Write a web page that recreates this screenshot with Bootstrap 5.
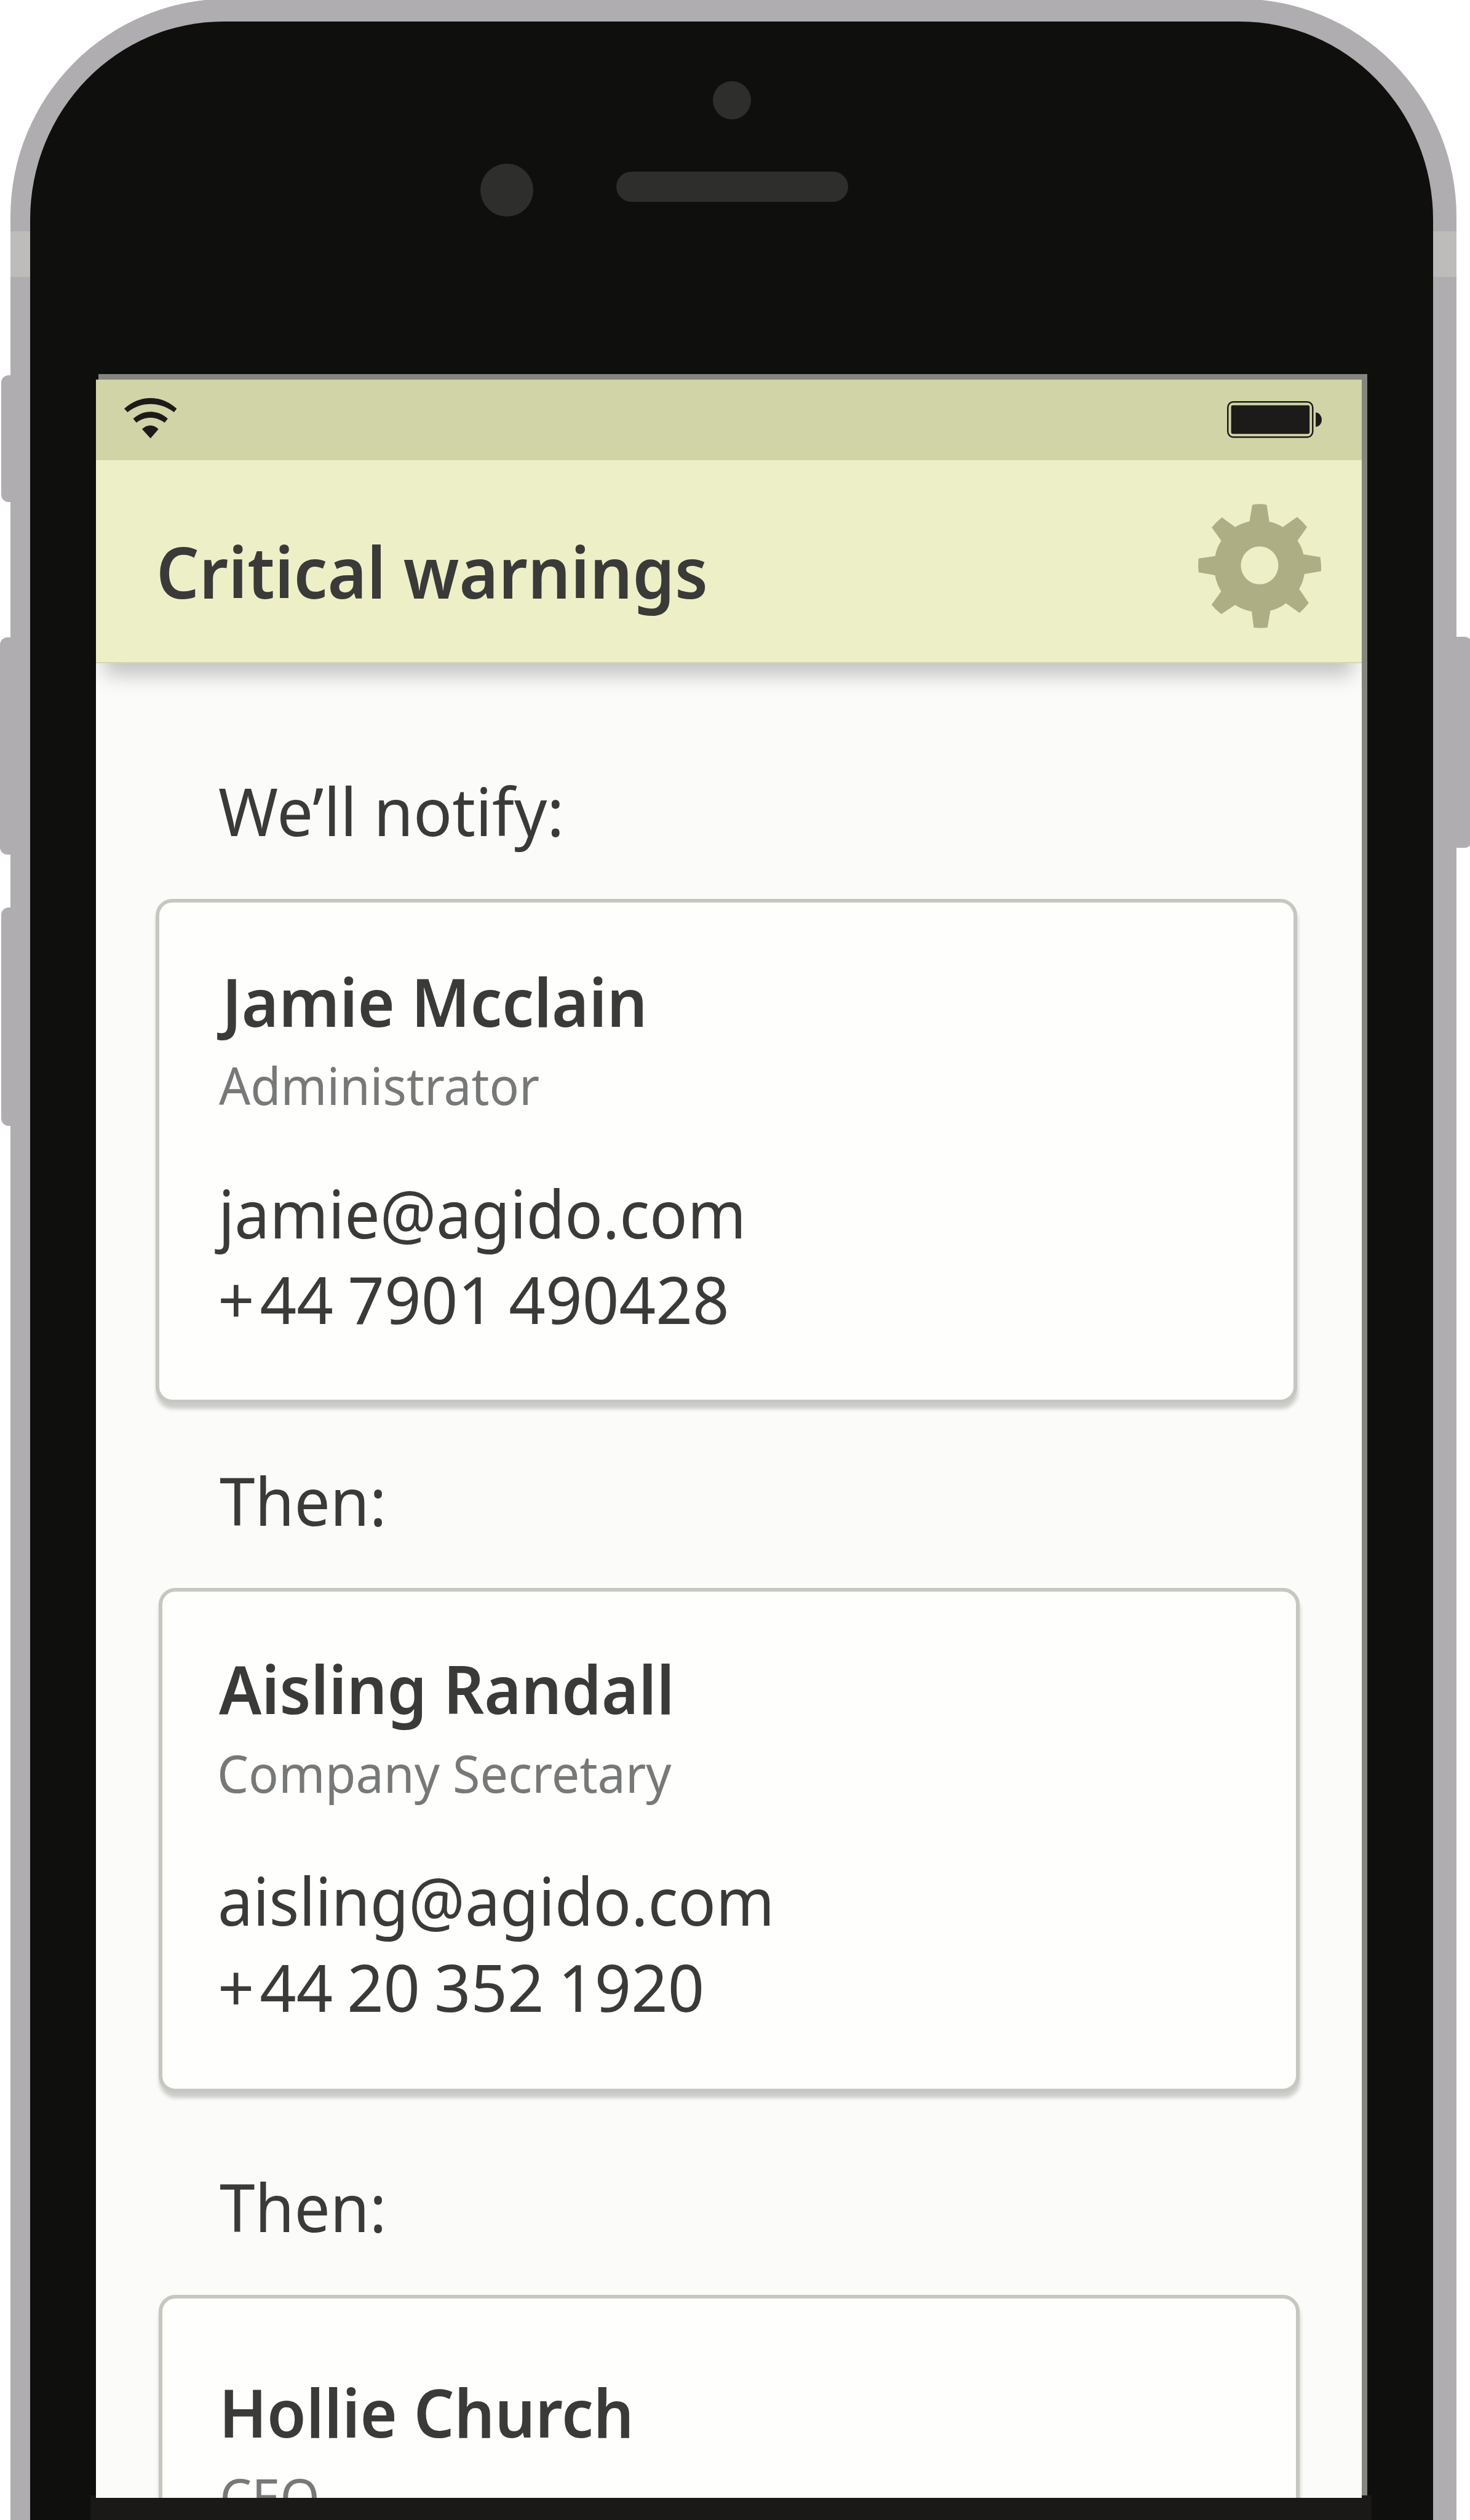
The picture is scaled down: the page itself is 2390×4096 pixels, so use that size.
<!DOCTYPE html>
<html lang="en">
<head>
<meta charset="utf-8">
<meta name="viewport" content="width=device-width, initial-scale=1">
<title>Critical warnings</title>
<link href="https://cdn.jsdelivr.net/npm/bootstrap@5.3.0/dist/css/bootstrap.min.css" rel="stylesheet">
<style>
  body { background: #fff; font-family: "Noto Sans", "Open Sans", sans-serif; color: #3a3a38; }
  .stage { width: 2390px; height: 4096px; }

  /* phone body */
  .phone { width: 2351.5px; height: 4098px; margin: -2px 0 0 16.8px; padding: 36.8px 38.3px 0 32.7px; background: #afadb0; border-radius: 354px 354px 0 0; }
  .side-key { background: #afadb0; border-radius: 12px; }
  .key-mute { left: 2px; top: 609.5px; width: 50px; height: 206px; }
  .key-up { left: 0; top: 1036px; width: 50px; height: 353px; }
  .key-down { left: 1.5px; top: 1474.5px; width: 50px; height: 355px; }
  .key-power { left: 2334px; top: 1035px; width: 59px; height: 343px; }
  .antenna { left: 0; top: 378px; height: 73.5px; background: #bebcba; }
  .bezel { height: 4062px; background: #0f0f0d; border-radius: 314px 314px 0 0 / 322px 322px 0 0; }
  .brow { height: 573px; padding-top: 97.3px; }
  .lens { width: 62px; height: 62px; margin-left: 1110px; background: #2e2e2c; }
  .ear-row { margin: 72px 0 0 732px; gap: 134.5px; }
  .proximity { width: 86px; height: 86px; background: #2e2e2c; }
  .speaker { width: 376.7px; height: 49.5px; margin-top: 12.5px; background: #2e2e2c; }

  /* screen glass */
  .glass { width: 2066.7px; height: 3452.7px; margin-left: 106.8px; padding: 9px 9px 0 0; background: linear-gradient(#84867f, #84867f) 4px 0 no-repeat; }
  .screen { z-index: 1; height: 3443.7px; background: #fbfbfa; }
  .chin { width: 2083px; height: 60px; margin: -4px 0 0 97.5px; background: #1a1917; }

  .statusbar { flex: none; height: 131.6px; padding: 0 65.4px 0 45.5px; background: #d0d4a6; }
  .ico-wifi { width: 85.4px; height: 65.4px; margin-top: 30.6px; }
  .ico-battery { width: 154px; height: 60px; margin-top: 35.6px; }
  .titlebar { flex: none; z-index: 1; height: 329.8px; padding: 0 65.4px 0 97px; background: #edf0c7; border-bottom: 2px solid #d4d7b2; box-shadow: 0 34px 30px -14px rgba(0, 0, 0, .22); }
  .ico-gear { width: 200.2px; height: 202.1px; margin-top: 70.4px; }

  /* text lines, slightly condensed */
  .txt { --sx: .96; --dx: 0px; display: block; width: max-content; white-space: nowrap; line-height: 140px; margin: 0 0 0 var(--dx); font-size: 108px; font-weight: 400; transform: scaleX(var(--sx)); transform-origin: 0 0; }
  .txt-title { font-size: 115px; font-weight: 600; margin-top: 111px; }
  .txt-name { font-weight: 600; }
  .txt-role { font-size: 84px; line-height: 100px; margin-top: 16.5px; color: #777978; }
  .txt-mail { margin-top: 87.4px; }
  .txt-phone { font-size: 106px; margin-top: -.7px; word-spacing: -4px; }
  .plus-sign { letter-spacing: 9px; }

  .stage-label { padding-left: 198.7px; margin-bottom: 72.5px; }
  .label-first { margin-top: 170.3px; }
  .label-second { margin-top: 88.3px; }
  .label-third { margin-top: 116.2px; }
  .contact { flex: none; width: 1854.5px; height: 819.6px; margin-left: 101.9px; padding: 88px 0 0 90.8px; background: #fefefd; border: 6px solid #c7c7c1; border-radius: 27px; box-shadow: 1px 9px 6px rgba(0, 0, 0, .19); }
  .contact-first { width: 1856px; margin-left: 96.9px; padding: 90.8px 0 0 95.8px; }
  .contact-last { padding-top: 115.5px; }
</style>
</head>
<body>
<main class="stage position-relative overflow-hidden">
  <div class="side-key key-mute position-absolute"></div>
  <div class="side-key key-up position-absolute"></div>
  <div class="side-key key-down position-absolute"></div>
  <div class="side-key key-power position-absolute"></div>

  <div class="phone position-relative">
    <div class="antenna position-absolute w-100"></div>
    <div class="bezel position-relative">
      <div class="brow">
        <div class="lens rounded-circle"></div>
        <div class="ear-row d-flex align-items-start">
          <div class="proximity rounded-circle"></div>
          <div class="speaker rounded-pill"></div>
        </div>
      </div>

      <div class="glass">
        <div class="screen position-relative overflow-hidden d-flex flex-column">
          <div class="statusbar d-flex justify-content-between align-items-start">
            <svg class="ico-wifi" viewBox="265 207 112 185" preserveAspectRatio="none" fill="#1c1b19" aria-hidden="true">
              <path d="M265 256C298 191 344 191 377 256L371 272C341 222 301 222 272 272Z"/>
              <path d="M284 302C306 259 336 259 358 302L351 320C333 290 309 290 291 320Z"/>
              <path d="M303 350C313 327 328 327 338 350L321 392Z"/>
            </svg>
            <svg class="ico-battery" viewBox="2016.3 659.3 155.7 60.5" preserveAspectRatio="none" aria-hidden="true">
              <rect x="2017.6" y="660.6" width="139.5" height="57.6" rx="9" fill="none" stroke="#1c1b19" stroke-width="2.5"/>
              <rect x="2023" y="666" width="129" height="47" rx="2.5" fill="#1c1b19"/>
              <path d="M2162 678A10 11.7 0 0 1 2162 701.4Z" fill="#1c1b19"/>
            </svg>
          </div>

          <header class="titlebar position-relative d-flex justify-content-between align-items-start">
            <h1 class="txt txt-title" style="--sx:.951;--dx:1px">Critical warnings</h1>
            <svg class="ico-gear" viewBox="209 690 607 572" preserveAspectRatio="none" fill="#adae83" fill-rule="evenodd" aria-label="Settings">
              <path d="M476 694Q512 688 547 694L560 772Q595 778 626 797L697 750Q724 770 746 797L699 859Q721 890 728 922L811 935Q817 967 815 1000L733 1013Q727 1050 707 1081L754 1146Q735 1170 709 1192L642 1147Q608 1172 565 1181L551 1259Q517 1263 483 1259L473 1185Q430 1178 391 1155L323 1197Q298 1180 275 1154L323 1092Q300 1060 292 1018L211 1005Q208 973 211 941L293 930Q300 892 323 860L276 798Q300 772 326 752L392 797Q425 778 462 771ZM419.500 973A92.500 87 0 1 0 604.500 973A92.500 87 0 1 0 419.500 973Z"/>
            </svg>
          </header>

          <div class="stage-label label-first"><p class="txt" style="--sx:.968">We’ll notify:</p></div>
          <section class="contact contact-first">
            <h2 class="txt txt-name" style="--sx:.955;--dx:6px">Jamie Mcclain</h2>
            <p class="txt txt-role" style="--sx:.955;--dx:1px">Administrator</p>
            <p class="txt txt-mail" style="--sx:.944;--dx:0px">jamie@agido.com</p>
            <p class="txt txt-phone" style="--sx:.985;--dx:-1px"><span class="plus-sign">+</span>44 7901 490428</p>
          </section>

          <div class="stage-label label-second"><p class="txt" style="--sx:.958;--dx:2px">Then:</p></div>
          <section class="contact">
            <h2 class="txt txt-name" style="--sx:.955;--dx:1px">Aisling Randall</h2>
            <p class="txt txt-role" style="--sx:.963;--dx:-2px">Company Secretary</p>
            <p class="txt txt-mail" style="--sx:.943;--dx:-1px">aisling@agido.com</p>
            <p class="txt txt-phone" style="--sx:.98;--dx:-1px"><span class="plus-sign">+</span>44 20 352 1920</p>
          </section>

          <div class="stage-label label-third"><p class="txt" style="--sx:.958;--dx:2px">Then:</p></div>
          <section class="contact contact-last">
            <h2 class="txt txt-name" style="--sx:.956;--dx:1px">Hollie Church</h2>
            <p class="txt txt-role" style="--sx:.985;--dx:2px">CEO</p>
          </section>
        </div>
      </div>
      <div class="chin"></div>
    </div>
  </div>
</main>
<script src="https://cdn.jsdelivr.net/npm/bootstrap@5.3.0/dist/js/bootstrap.bundle.min.js"></script>
</body>
</html>
